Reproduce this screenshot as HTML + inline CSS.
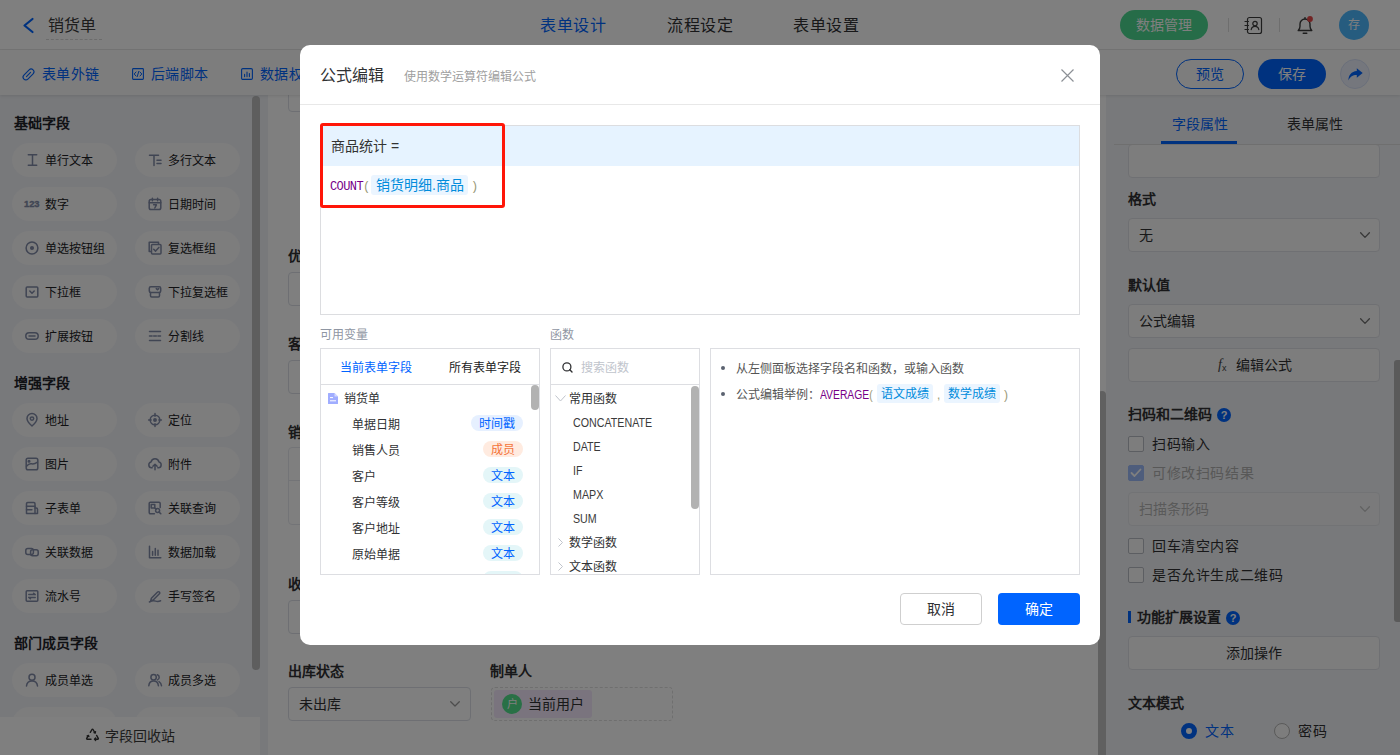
<!DOCTYPE html>
<html lang="zh-CN">
<head>
<meta charset="utf-8">
<title>公式编辑</title>
<style>
*{box-sizing:border-box;margin:0;padding:0}
html,body{width:1400px;height:755px;overflow:hidden;background:#fff;font-family:"Liberation Sans",sans-serif;font-size:14px;color:#303133}
svg{display:block;overflow:visible}
.a{position:absolute;white-space:nowrap}
#app{position:absolute;left:0;top:0;width:1400px;height:755px;overflow:hidden;background:#fff}
/* ---------- top bar ---------- */
#top{position:absolute;left:0;top:0;width:1400px;height:50px;background:#fff;border-bottom:1px solid #e9e9e9}
#top .ttl{left:48px;top:14px;height:24px;line-height:24px;font-size:16px;color:#3a3a3a}
#top .ul{left:46px;top:39px;width:56px;height:0;border-top:1px dashed #d8d8d8}
#top .tab{top:14px;height:24px;line-height:24px;font-size:16px;color:#303133;letter-spacing:.5px}
#top .tab.on{color:#0064ff}
#top .gbtn{left:1120px;top:10px;width:88px;height:30px;border-radius:15px;background:#4cd890;color:#fff;font-size:14px;line-height:30px;text-align:center}
#top .vd{top:18px;width:1px;height:14px;background:#dcdcdc}
#top .av{left:1339px;top:10px;width:30px;height:30px;border-radius:50%;background:#4cb8ff;color:#fff;font-size:12px;line-height:31px;text-align:center}
/* ---------- second bar ---------- */
#bar2{position:absolute;left:0;top:50px;width:1400px;height:45px;background:#fafafa;box-shadow:0 1px 3px rgba(0,0,0,.10);z-index:2}
#bar2 .lk{top:13px;height:22px;line-height:22px;font-size:14px;color:#0064ff;letter-spacing:.3px}
#bar2 .pv{left:1176px;top:9px;width:68px;height:30px;border-radius:15px;border:1px solid #0064ff;color:#0064ff;font-size:14px;line-height:28px;text-align:center}
#bar2 .sv{left:1258px;top:9px;width:68px;height:30px;border-radius:15px;background:#0064ff;color:#fff;font-size:14px;line-height:30px;text-align:center}
#bar2 .sh{left:1340px;top:9px;width:30px;height:30px;border-radius:50%;background:#eaeffb;border:1px solid #d6dff5}
/* ---------- left panel ---------- */
#left{position:absolute;left:0;top:95px;width:268px;height:660px;background:#f0f2f6;overflow:hidden}
#left .h{left:14px;height:20px;line-height:20px;font-size:14px;font-weight:bold;color:#1f2329}
#left .p{width:105px;height:34px;border-radius:17px;background:#fafafb;font-size:12px;line-height:34px;color:#202124}
#left .p.c1{left:12px}
#left .p.c2{left:135px}
#left .p span{position:absolute;left:33px;top:1px;white-space:nowrap}
#left .p svg{position:absolute;left:13px;top:9.5px;width:14px;height:14px;stroke:#808aa6;fill:none;stroke-width:1.5;stroke-linecap:round;stroke-linejoin:round}
#left .thumb{left:252px;top:1px;width:8px;height:574px;border-radius:4px;background:#bdbdbd}
#left .foot{left:0;top:622px;width:260px;height:38px;background:#fefefe;font-size:14px;color:#3a3a3a;line-height:38px}
/* ---------- center ---------- */
#center{position:absolute;left:268px;top:95px;width:838px;height:660px;background:#fff;overflow:hidden}
#center .lb{font-size:14px;font-weight:bold;color:#303133;height:20px;line-height:20px}
#center .in{height:34px;border:1px solid #dcdfe6;border-radius:4px;background:#fff}
#center .sb{left:830px;top:296px;width:8px;height:380px;border-radius:4px;background:#c1c1c1}
/* ---------- right panel ---------- */
#right{position:absolute;left:1106px;top:95px;width:294px;height:660px;background:#f1f3f6;overflow:hidden}
#right .tb{top:19px;height:20px;line-height:20px;font-size:14px;color:#303133}
#right .tb.on{color:#0064ff}
#right .hl{left:8px;top:49px;width:286px;height:1px;background:#dedede}
#right .ub{left:55px;top:46px;width:76px;height:3px;background:#0064ff}
#right .lb{left:22px;height:20px;line-height:20px;font-size:14px;font-weight:bold;color:#303133}
#right .bx{left:22px;width:252px;height:34px;border:1px solid #dfe1e6;border-radius:4px;background:#fafafa;font-size:14px;line-height:32px;color:#303133}
#right .bx span{position:absolute;left:10px;top:0}
#right .bx.c{text-align:center}
#right .ck{left:22px;width:16px;height:16px;border:1px solid #b9bcc4;border-radius:2px;background:#fafafa}
#right .ct{left:46px;height:20px;line-height:20px;font-size:14px;color:#303133;letter-spacing:.6px}
#right .q{width:14px;height:14px;border-radius:50%;background:#0064ff;color:#fff;font-size:11px;font-weight:bold;line-height:14px;text-align:center}
#right .rt{left:288px;top:265px;width:6px;height:262px;border-radius:3px 0 0 3px;background:#b4b4b4}
/* ---------- mask + dialog ---------- */
#mask{position:absolute;left:0;top:0;width:1400px;height:755px;background:rgba(0,0,0,.5);z-index:10}
#dlg{position:absolute;left:300px;top:45px;width:800px;height:600px;background:#fff;border-radius:10px;z-index:11;overflow:hidden}
#dlg .hd{left:0;top:0;width:800px;height:60px;border-bottom:1px solid #e8e8e8}
#dlg .t1{left:20px;top:19px;height:24px;line-height:24px;font-size:16px;color:#303133}
#dlg .t2{left:104px;top:22px;height:20px;line-height:20px;font-size:12px;color:#a0a0a0}
#dlg .ed{left:20px;top:80px;width:760px;height:190px;border:1px solid #dcdde0;background:#fff}
#dlg .bl{left:0;top:0;width:758px;height:40px;background:#e6f3ff}
#dlg .fn{left:10px;top:10px;height:20px;line-height:20px;font-size:14px;color:#333}
#dlg .red{left:20px;top:78px;width:185px;height:85px;border:3px solid #ff1608;border-radius:3px}
#dlg .sl{font-size:12px;color:#8f96a3;height:16px;line-height:16px}
#dlg .pn{top:303px;height:227px;border:1px solid #dddee2;background:#fff;overflow:hidden}
#dlg .pn .dv{left:0;top:35px;width:100%;height:1px;background:#dddee2}
#dlg .row{margin-top:1px;height:26px;line-height:26px;font-size:12px;color:#303133}
#dlg .tg{left:162px;width:40px;height:16px;border-radius:8px;font-size:12px;line-height:18px;text-align:center;color:#0064ff;background:#e4f6f8}
#dlg .tg.m{color:#f4743b;background:#ffebe0}
#dlg .tg.t{left:150px;width:52px;background:#e6f0ff}
#dlg .st{width:8px;border-radius:4px;background:#b2b2b2}
#dlg .fr{margin-top:1px;height:24px;line-height:24px;font-size:12px;color:#303133}
#dlg .fr.e{font-size:12px;transform:scaleX(.89);transform-origin:0 50%;color:#3a3a3a}
#dlg .hp{font-size:12px;color:#555;height:20px;line-height:22px}
#dlg .chip{display:inline-block;background:#ebf5ff;color:#008cdc;border-radius:3px;padding:0 4px;height:19px;line-height:21px}
#dlg .bt{top:548px;width:82px;height:32px;border-radius:4px;font-size:14px;line-height:30px;text-align:center}
#dlg .bt.cn{left:600px;border:1px solid #cfcfcf;color:#303133;background:#fff}
#dlg .bt.ok{left:698px;background:#0064ff;color:#fff;line-height:32px}
</style>
</head>
<body>
<div id="app">
<!-- ================= TOP BAR ================= -->
<div id="top">
  <svg class="a" style="left:23px;top:18px" width="11" height="15" viewBox="0 0 11 15"><path d="M9.500 1L1.500 7.500l8 6.500" fill="none" stroke="#0064ff" stroke-width="2.200" stroke-linecap="round" stroke-linejoin="round"/></svg>
  <div class="a ttl">销货单</div>
  <div class="a ul"></div>
  <div class="a tab on" style="left:540px">表单设计</div>
  <div class="a tab" style="left:667px">流程设定</div>
  <div class="a tab" style="left:793px">表单设置</div>
  <div class="a gbtn">数据管理</div>
  <div class="a vd" style="left:1228px"></div>
  <!-- contacts icon -->
  <svg class="a" style="left:1244px;top:16px" width="19" height="19" viewBox="0 0 19 19" fill="none" stroke="#3c3c3c" stroke-width="1.2" stroke-linecap="round" stroke-linejoin="round">
    <rect x="3.5" y="1.5" width="14" height="16" rx="2"/>
    <path d="M1 5.5h3.5M1 9.5h3.5M1 13.5h3.5"/>
    <circle cx="11" cy="7.6" r="2.2"/>
    <path d="M7.2 13.6c.4-2.2 2-3.2 3.8-3.2s3.400 1 3.800 3.200"/>
  </svg>
  <div class="a vd" style="left:1279px"></div>
  <!-- bell -->
  <svg class="a" style="left:1297px;top:16px" width="16" height="19" viewBox="0 0 16 19" fill="none" stroke="#3c3c3c" stroke-width="1.4" stroke-linecap="round" stroke-linejoin="round">
    <path d="M1.200 14.500h13.600c-1.300-1-1.800-2.200-1.800-4.200V8A5 5 0 0 0 3 8v2.300c0 2-.5 3.200-1.800 4.200z"/>
    <path d="M6.200 17.300h3.600"/>
    <path d="M8 2.800V1.600"/>
    <circle cx="13" cy="3" r="2.900" fill="#e54848" stroke="none"/>
  </svg>
  <div class="a av">存</div>
</div>
<!-- ================= SECOND BAR ================= -->
<div id="bar2">
  <svg class="a" style="left:22px;top:18px" width="13" height="13" viewBox="0 0 13 13" fill="none" stroke="#0064ff" stroke-width="1.100" stroke-linecap="round" stroke-linejoin="round">
    <g transform="rotate(-45 6.5 6.5)"><rect x="0" y="3.700" width="13" height="5.600" rx="2.800"/><path d="M3.600 6.500h5.800"/></g>
  </svg>
  <div class="a lk" style="left:42px">表单外链</div>
  <svg class="a" style="left:132px;top:18px" width="12" height="12" viewBox="0 0 12 12" fill="none" stroke="#0064ff" stroke-width="1.100" stroke-linecap="round" stroke-linejoin="round">
    <rect x=".6" y=".6" width="10.800" height="10.800" rx=".8"/>
    <path d="M4 4L2.200 6 4 8M8 4l1.800 2L8 8M6.800 3.400L5.200 8.600" stroke-width="1"/>
  </svg>
  <div class="a lk" style="left:151px">后端脚本</div>
  <svg class="a" style="left:241px;top:18px" width="12" height="12" viewBox="0 0 12 12" fill="none" stroke="#0064ff" stroke-width="1.100" stroke-linecap="round" stroke-linejoin="round">
    <rect x=".6" y=".6" width="10.800" height="10.800" rx="1.200"/>
    <path d="M3.600 8.600V6.400M6 8.600V4M8.400 8.600V5.600"/>
  </svg>
  <div class="a lk" style="left:260px">数据权限</div>
  <div class="a pv">预览</div>
  <div class="a sv">保存</div>
  <div class="a sh"><svg style="position:absolute;left:7px;top:8px" width="15" height="13" viewBox="0 0 15 13"><path d="M8.800.3L14.700 5 8.800 9.700V7C5 6.900 2.300 8.300.4 12.400.5 7.300 3.300 3.300 8.800 3z" fill="#0064ff"/></svg></div>
</div>
<!-- ================= LEFT PANEL ================= -->
<div id="left">
  <div class="a h" style="top:18px">基础字段</div>
  <div class="a p c1" style="top:48px"><svg viewBox="0 0 14 14"><path d="M3.300 1.800h8.400M3.300 12.200h8.400M7.500 1.800v10.400"/></svg><span>单行文本</span></div>
  <div class="a p c2" style="top:48px"><svg viewBox="0 0 14 14"><path d="M1.500 2.200h9M6 2.200v10.300M9 7.300h4M9 10.500h4"/></svg><span>多行文本</span></div>
  <div class="a p c1" style="top:92px"><svg viewBox="0 0 14 14"><text x="-1" y="10.200" font-size="9.300" font-weight="bold" font-family="Liberation Sans, sans-serif" fill="#808aa6" stroke="#808aa6" stroke-width=".35">123</text></svg><span>数字</span></div>
  <div class="a p c2" style="top:92px"><svg viewBox="0 0 14 14"><rect x="1.200" y="2.600" width="11.600" height="10" rx="1.800"/><path d="M1.200 5.800h11.600M4.400 1.300v2.500M9.600 1.300v2.500M5.600 7.800h2.800l-1.600 3.200"/></svg><span>日期时间</span></div>
  <div class="a p c1" style="top:136px"><svg viewBox="0 0 14 14"><circle cx="7" cy="7" r="5.900"/><circle cx="7" cy="7" r="1.300" fill="#808aa6"/></svg><span>单选按钮组</span></div>
  <div class="a p c2" style="top:136px"><svg viewBox="0 0 14 14"><path d="M2.800 10.500H1.200V1.200h9.300v1.600"/><rect x="3.500" y="3.500" width="9.500" height="9.500" rx="1"/><path d="M5.700 8.200l1.900 1.900 3.300-3.700"/></svg><span>复选框组</span></div>
  <div class="a p c1" style="top:180px"><svg viewBox="0 0 14 14"><rect x="1.200" y="2" width="11.600" height="10" rx="1"/><path d="M4.800 6l2.200 2.200L9.200 6"/></svg><span>下拉框</span></div>
  <div class="a p c2" style="top:180px"><svg viewBox="0 0 14 14"><rect x="1.300" y="1.800" width="11.400" height="5.600" rx="1.500"/><path d="M8.300 3.600l1.200 1.200 1.200-1.200"/><path d="M2.500 7.400v3.400a1.200 1.200 0 0 0 1.200 1.200h6.600a1.200 1.200 0 0 0 1.200-1.200V7.400"/></svg><span>下拉复选框</span></div>
  <div class="a p c1" style="top:224px"><svg viewBox="0 0 14 14"><rect x=".8" y="3.700" width="12.400" height="6.600" rx="3.300"/><path d="M4 7h6"/></svg><span>扩展按钮</span></div>
  <div class="a p c2" style="top:224px"><svg viewBox="0 0 14 14"><path d="M1.500 2.500h11M1.500 11.500h11"/><path d="M1.500 7h11" stroke-dasharray="2.600 1.600"/></svg><span>分割线</span></div>
  <div class="a h" style="top:278px">增强字段</div>
  <div class="a p c1" style="top:308px"><svg viewBox="0 0 14 14"><path d="M7 13S2 8.800 2 5.600a5 5 0 0 1 10 0C12 8.800 7 13 7 13z"/><circle cx="7" cy="5.600" r="1.700"/></svg><span>地址</span></div>
  <div class="a p c2" style="top:308px"><svg viewBox="0 0 14 14"><circle cx="7" cy="7" r="4.800"/><circle cx="7" cy="7" r="1.200" fill="#808aa6"/><path d="M7 .6v2.600M7 10.800v2.600M.6 7h2.600M10.800 7h2.600"/></svg><span>定位</span></div>
  <div class="a p c1" style="top:352px"><svg viewBox="0 0 14 14"><rect x="1.200" y="1.200" width="11.600" height="11.600" rx="1.800"/><path d="M1.500 9.200c2-2.400 3.600-2.800 5.200-2.400s3 .2 5.800-1.600"/><circle cx="4" cy="4.200" r=".8"/></svg><span>图片</span></div>
  <div class="a p c2" style="top:352px"><svg viewBox="0 0 14 14"><path d="M4.200 10.800h-.6a3 3 0 0 1-.5-5.900 4 4 0 0 1 7.800 0 3 3 0 0 1-.500 5.900h-.6"/><path d="M7 12.800V7.400M4.900 9.300L7 7.200l2.100 2.100"/></svg><span>附件</span></div>
  <div class="a p c1" style="top:396px"><svg viewBox="0 0 14 14"><path d="M1.500 12.500V2.700a1.200 1.200 0 0 1 1.200-1.200h6.100A1.200 1.200 0 0 1 10 2.700V7h1.300a1.200 1.200 0 0 1 1.200 1.200v4.300z"/><path d="M1.500 5.200H10M1.500 8.800h5.400M10 7v5.500"/></svg><span>子表单</span></div>
  <div class="a p c2" style="top:396px"><svg viewBox="0 0 14 14"><path d="M12.200 6.400V2.400a1.200 1.200 0 0 0-1.200-1.200H2.400a1.200 1.200 0 0 0-1.200 1.200v9.200a1.200 1.200 0 0 0 1.200 1.200h4"/><rect x="3.200" y="3.400" width="3.600" height="3.600"/><circle cx="9.600" cy="9.600" r="2"/><path d="M11.100 11.100l1.700 1.700M6.800 7l1.300 1.300"/></svg><span>关联查询</span></div>
  <div class="a p c1" style="top:440px"><svg viewBox="0 0 14 14"><rect x=".8" y="3.400" width="7.600" height="6" rx="2"/><rect x="5.600" y="4.800" width="7.600" height="6" rx="2"/></svg><span>关联数据</span></div>
  <div class="a p c2" style="top:440px"><svg viewBox="0 0 14 14"><path d="M1.500 1.300v11.400h11.300M4.600 10.200V6.400M7.300 10.200V3.400M10 10.200V5.200"/></svg><span>数据加载</span></div>
  <div class="a p c1" style="top:484px"><svg viewBox="0 0 14 14"><rect x="1.200" y="1.800" width="11.600" height="10.400" rx="1"/><path d="M3.800 5.600h6.400M8.600 4.300l1.600 1.300M3.800 8.400h6.400M5.400 9.700L3.800 8.400"/></svg><span>流水号</span></div>
  <div class="a p c2" style="top:484px"><svg viewBox="0 0 14 14"><path d="M3.400 9.200l-.7 2.400 2.500-.6 6.200-6.200a1.200 1.200 0 0 0-1.800-1.800z"/><path d="M1.400 13c2.500-1.300 4.500-1.500 6.200-.9s3.200.5 5-.3"/></svg><span>手写签名</span></div>
  <div class="a h" style="top:538px">部门成员字段</div>
  <div class="a p c1" style="top:568px"><svg viewBox="0 0 14 14"><circle cx="7" cy="4.300" r="3"/><path d="M1.500 13c.3-3.300 2.600-5 5.500-5s5.200 1.700 5.500 5"/></svg><span>成员单选</span></div>
  <div class="a p c2" style="top:568px"><svg viewBox="0 0 14 14"><circle cx="5.600" cy="4.300" r="2.700"/><path d="M.8 12.800c.3-3.100 2.200-4.800 4.800-4.800s4.500 1.700 4.800 4.800"/><path d="M9.400 1.800a2.700 2.700 0 0 1 0 5.100M11 8.600c1.500.8 2.300 2.200 2.500 4.200"/></svg><span>成员多选</span></div>
  <div class="a p c1" style="top:612px"><svg viewBox="0 0 14 14"><circle cx="7" cy="4.300" r="3"/><path d="M1.500 13c.3-3.300 2.600-5 5.500-5s5.200 1.700 5.500 5"/></svg><span>部门单选</span></div>
  <div class="a p c2" style="top:612px"><svg viewBox="0 0 14 14"><circle cx="5.600" cy="4.300" r="2.700"/><path d="M.8 12.800c.3-3.100 2.200-4.800 4.800-4.800s4.500 1.700 4.800 4.800"/><path d="M9.400 1.800a2.700 2.700 0 0 1 0 5.100M11 8.600c1.500.8 2.300 2.200 2.500 4.200"/></svg><span>部门多选</span></div>
  <div class="a thumb"></div>
  <div class="a foot"><svg class="a" style="left:85px;top:11px" width="15" height="15" viewBox="0 0 15 15" fill="none" stroke="#333" stroke-width="1.400" stroke-linecap="round" stroke-linejoin="round"><path d="M5.300 4.300L7 1.500a.6.600 0 0 1 1 0l2 3.300M9 4.600l1.200.4.300-1.300M11.600 7.400l1.700 2.900a.6.600 0 0 1-.5.900H9.500M10.600 10l-1.100 1.200 1.100 1.200M6 11.200H2.200a.6.600 0 0 1-.5-.9l1.700-2.900M2.200 7.800l1.300-.4.400 1.200"/></svg><span class="a" style="left:105px;top:0">字段回收站</span></div>
</div>
<!-- ================= CENTER ================= -->
<div id="center">
  <!-- coordinates relative to (268,95) -->
  <div class="a in" style="left:20px;top:-17px;width:400px"></div>
  <div class="a lb" style="left:20px;top:151px">优惠金额</div>
  <div class="a in" style="left:20px;top:177px;width:400px"></div>
  <div class="a lb" style="left:20px;top:239px">客户地址</div>
  <div class="a in" style="left:20px;top:265px;width:400px"></div>
  <div class="a lb" style="left:20px;top:327px">销货明细</div>
  <div class="a" style="left:20px;top:352px;width:800px;height:78px;border:1px solid #e6e9ef;border-radius:4px"></div>
  <div class="a" style="left:20px;top:385px;width:800px;height:1px;background:#e6e9ef"></div>
  <div class="a lb" style="left:20px;top:479px">收款方式</div>
  <div class="a in" style="left:20px;top:505px;width:400px"></div>
  <div class="a lb" style="left:20px;top:566px">出库状态</div>
  <div class="a in" style="left:20px;top:592px;width:183px"></div>
  <div class="a" style="left:31px;top:599px;font-size:14px;line-height:20px;color:#303133">未出库</div>
  <svg class="a" style="left:182px;top:606px" width="10" height="6" viewBox="0 0 10 6"><path d="M.7.700L5 5 9.300.7" fill="none" stroke="#9a9a9a" stroke-width="1.300" stroke-linecap="round" stroke-linejoin="round"/></svg>
  <div class="a lb" style="left:222px;top:566px">制单人</div>
  <div class="a" style="left:223px;top:592px;width:182px;height:34px;border:1px dashed #dedede;border-radius:4px"></div>
  <div class="a" style="left:226px;top:595px;width:98px;height:28px;border-radius:3px;background:#f4e8fc"></div>
  <div class="a" style="left:234px;top:599px;width:20px;height:20px;border-radius:50%;background:#52e08c;color:#fff;font-size:11px;line-height:20px;text-align:center">户</div>
  <div class="a" style="left:260px;top:599px;font-size:14px;line-height:20px;color:#303133">当前用户</div>
  <div class="a sb"></div>
</div>
<!-- ================= RIGHT PANEL ================= -->
<div id="right">
  <!-- coordinates relative to (1106,95) -->
  <div class="a tb on" style="left:66px">字段属性</div>
  <div class="a tb" style="left:181px">表单属性</div>
  <div class="a bx" style="top:49px"></div>
  <div class="a hl"></div>
  <div class="a ub"></div>
  <div class="a lb" style="top:94px">格式</div>
  <div class="a bx" style="top:123px"><span>无</span></div>
  <svg class="a" style="left:253.5px;top:137px" width="10" height="7" viewBox="0 0 10 7"><path d="M.6.800L5 5.400 9.400.8" fill="none" stroke="#707070" stroke-width="1.300" stroke-linecap="round" stroke-linejoin="round"/></svg>
  <div class="a lb" style="top:180px">默认值</div>
  <div class="a bx" style="top:209px"><span>公式编辑</span></div>
  <svg class="a" style="left:253.5px;top:223px" width="10" height="7" viewBox="0 0 10 7"><path d="M.6.800L5 5.400 9.400.8" fill="none" stroke="#707070" stroke-width="1.300" stroke-linecap="round" stroke-linejoin="round"/></svg>
  <div class="a bx" style="top:253px"></div>
  <div class="a" style="left:112px;top:260px;font-size:14px;line-height:20px;color:#444;font-family:'Liberation Serif',serif;font-style:italic">f<span style="font-size:9px;position:relative;top:2px;font-style:normal;font-family:'Liberation Sans',sans-serif">x</span></div>
  <div class="a" style="left:130px;top:260px;font-size:14px;line-height:20px;color:#303133">编辑公式</div>
  <div class="a lb" style="top:309px">扫码和二维码</div>
  <div class="a q" style="left:111px;top:313px">?</div>
  <div class="a ck" style="top:341px"></div>
  <div class="a ct" style="top:339px">扫码输入</div>
  <div class="a ck" style="top:370px;background:#9dbaf8;border-color:#9dbaf8"><svg style="position:absolute;left:1px;top:2px" width="12" height="10" viewBox="0 0 12 10"><path d="M1.500 5l3 3 6-6.500" fill="none" stroke="#fff" stroke-width="1.800" stroke-linecap="round" stroke-linejoin="round"/></svg></div>
  <div class="a ct" style="top:368px;color:#b0b0b0">可修改扫码结果</div>
  <div class="a bx" style="top:397px;color:#b4b4b4;background:#f4f5f7;border-color:#e4e6ea"><span>扫描条形码</span></div>
  <svg class="a" style="left:253.5px;top:411px" width="10" height="7" viewBox="0 0 10 7"><path d="M.6.800L5 5.400 9.400.8" fill="none" stroke="#c4c4c4" stroke-width="1.300" stroke-linecap="round" stroke-linejoin="round"/></svg>
  <div class="a ck" style="top:443px"></div>
  <div class="a ct" style="top:441px">回车清空内容</div>
  <div class="a ck" style="top:472px"></div>
  <div class="a ct" style="top:470px">是否允许生成二维码</div>
  <div class="a" style="left:22px;top:516px;width:3px;height:12px;background:#0064ff"></div>
  <div class="a lb" style="left:31px;top:512px">功能扩展设置</div>
  <div class="a q" style="left:120px;top:516px">?</div>
  <div class="a bx c" style="top:541px">添加操作</div>
  <div class="a lb" style="top:598px">文本模式</div>
  <div class="a" style="left:75px;top:628px;width:16px;height:16px;border-radius:50%;border:5px solid #0064ff;background:#fff"></div>
  <div class="a" style="left:99px;top:626px;font-size:14px;line-height:20px;letter-spacing:.5px;color:#0064ff">文本</div>
  <div class="a" style="left:168px;top:628px;width:16px;height:16px;border-radius:50%;border:1px solid #b4b4b4;background:#fafafa"></div>
  <div class="a" style="left:192px;top:626px;font-size:14px;line-height:20px;letter-spacing:.5px;color:#303133">密码</div>
  <div class="a rt"></div>
</div>
</div><!-- /app -->
<div id="mask"></div>
<!-- ================= DIALOG ================= -->
<div id="dlg">
  <div class="a hd"></div>
  <div class="a t1">公式编辑</div>
  <div class="a t2">使用数学运算符编辑公式</div>
  <svg class="a" style="left:761px;top:24px" width="13" height="13" viewBox="0 0 13 13"><path d="M.5.500l12 12M12.500.5l-12 12" fill="none" stroke="#8c9096" stroke-width="1.200"/></svg>
  <!-- editor -->
  <div class="a ed">
    <div class="a bl"></div>
    <div class="a fn">商品统计 =</div>
    <div class="a" style="left:9px;top:51px;height:20px;line-height:20px;font-family:'Liberation Mono',monospace;font-size:12px;letter-spacing:-.6px;color:#770088">COUNT<span style="color:#999977">(</span></div>
    <div class="a" style="left:50px;top:49px;width:97px;height:20px;border-radius:3px;background:#ebf5ff;color:#008cdc;font-size:14px;line-height:20px;padding-left:5px">销货明细.商品</div>
    <div class="a" style="left:150px;top:51px;height:20px;line-height:20px;font-family:'Liberation Mono',monospace;font-size:12px;color:#999977">)</div>
  </div>
  <div class="a red"></div>
  <!-- section labels -->
  <div class="a sl" style="left:20px;top:282px">可用变量</div>
  <div class="a sl" style="left:250px;top:282px">函数</div>
  <!-- variables panel -->
  <div class="a pn" style="left:20px;width:220px">
    <div class="a" style="left:19px;top:9px;height:20px;line-height:20px;font-size:12px;color:#0064ff">当前表单字段</div>
    <div class="a" style="left:128px;top:9px;height:20px;line-height:20px;font-size:12px;color:#222">所有表单字段</div>
    <div class="a dv"></div>
    <svg class="a" style="left:7px;top:44px" width="10" height="11" viewBox="0 0 10 11"><path d="M.5 0h6L10 3.500v7a.5.500 0 0 1-.5.500h-9a.5.500 0 0 1-.5-.5V.5A.5.500 0 0 1 .5 0z" fill="#a0adff"/><path d="M6.500 0v3.500H10z" fill="#d3d9ff"/><path d="M2 4.600h3M2 7.800h6" stroke="#fff" stroke-width="1"/></svg>
    <div class="a row" style="left:23px;top:36px">销货单</div>
    <div class="a row" style="left:31px;top:62px">单据日期</div><div class="a tg t" style="top:66px">时间戳</div>
    <div class="a row" style="left:31px;top:88px">销售人员</div><div class="a tg m" style="top:92px">成员</div>
    <div class="a row" style="left:31px;top:114px">客户</div><div class="a tg" style="top:118px">文本</div>
    <div class="a row" style="left:31px;top:140px">客户等级</div><div class="a tg" style="top:144px">文本</div>
    <div class="a row" style="left:31px;top:166px">客户地址</div><div class="a tg" style="top:170px">文本</div>
    <div class="a row" style="left:31px;top:192px">原始单据</div><div class="a tg" style="top:196px">文本</div>
    <div class="a tg" style="top:222px"></div>
    <div class="a st" style="left:210px;top:36px;height:25px"></div>
  </div>
  <!-- functions panel -->
  <div class="a pn" style="left:250px;width:150px">
    <svg class="a" style="left:11px;top:13px" width="11" height="11" viewBox="0 0 11 11"><circle cx="4.900" cy="4.900" r="4" fill="none" stroke="#303133" stroke-width="1.300"/><path d="M7.800 7.800l2.200 2.200" stroke="#303133" stroke-width="1.400" stroke-linecap="round"/></svg>
    <div class="a" style="left:30px;top:9px;height:20px;line-height:20px;font-size:12px;color:#c0c4cc">搜索函数</div>
    <div class="a dv"></div>
    <svg class="a" style="left:4px;top:46px" width="11" height="7" viewBox="0 0 11 7"><path d="M.5.500L5.500 6 10.500.5" fill="none" stroke="#c0c4cc" stroke-width="1"/></svg>
    <div class="a fr" style="left:18px;top:37px">常用函数</div>
    <div class="a fr e" style="left:22px;top:61px">CONCATENATE</div>
    <div class="a fr e" style="left:22px;top:85px">DATE</div>
    <div class="a fr e" style="left:22px;top:109px">IF</div>
    <div class="a fr e" style="left:22px;top:133px">MAPX</div>
    <div class="a fr e" style="left:22px;top:157px">SUM</div>
    <svg class="a" style="left:7px;top:189px" width="5" height="9" viewBox="0 0 5 9"><path d="M.5.500L4.500 4.500.5 8.500" fill="none" stroke="#c0c4cc" stroke-width="1"/></svg>
    <div class="a fr" style="left:18px;top:181px">数学函数</div>
    <svg class="a" style="left:7px;top:213px" width="5" height="9" viewBox="0 0 5 9"><path d="M.5.500L4.500 4.500.5 8.500" fill="none" stroke="#c0c4cc" stroke-width="1"/></svg>
    <div class="a fr" style="left:18px;top:205px">文本函数</div>
    <div class="a st" style="left:140px;top:37px;height:123px"></div>
  </div>
  <!-- help panel -->
  <div class="a pn" style="left:410px;width:370px">
    <div class="a" style="left:10px;top:17px;width:4px;height:4px;border-radius:50%;background:#5b6270"></div>
    <div class="a hp" style="left:25px;top:9px">从左侧面板选择字段名和函数，或输入函数</div>
    <div class="a" style="left:10px;top:43px;width:4px;height:4px;border-radius:50%;background:#5b6270"></div>
    <div class="a hp" style="left:25px;top:35px">公式编辑举例：</div>
    <div class="a hp" style="left:109px;top:35px;color:#770088;transform:scaleX(.86);transform-origin:0 50%">AVERAGE<span style="color:#999977">(</span></div>
    <div class="a hp chip" style="left:166px;top:35px">语文成绩</div>
    <div class="a hp" style="left:226px;top:35px;color:#999977">,</div>
    <div class="a hp chip" style="left:233px;top:35px">数学成绩</div>
    <div class="a hp" style="left:293px;top:35px;color:#999977">)</div>
  </div>
  <div class="a bt cn">取消</div>
  <div class="a bt ok">确定</div>
</div>
</body>
</html>
